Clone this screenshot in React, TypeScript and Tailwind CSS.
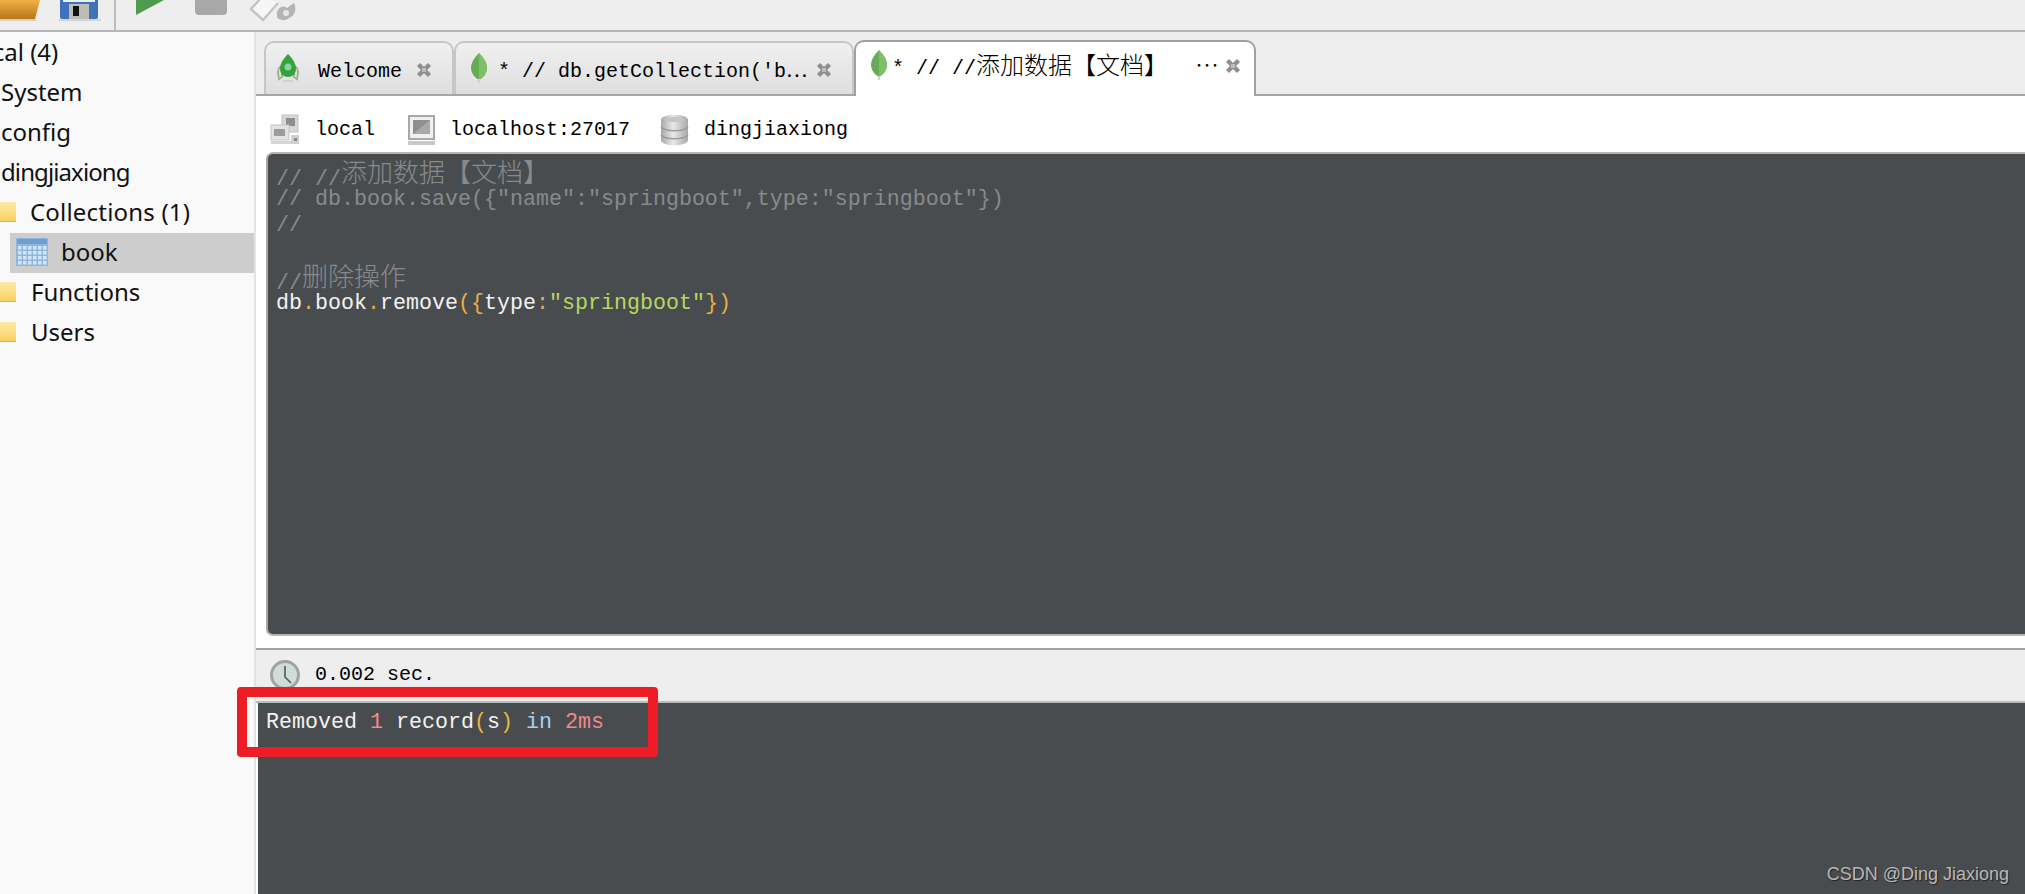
import React from "react";

const mono = "font-['Liberation_Mono','Noto_Sans_CJK_SC',monospace] text-[20px]";
const Cjk = ({ children, className = "" }: { children: React.ReactNode; className?: string }) => (
  <span className={"font-['Noto_Sans_CJK_SC',sans-serif] text-[24px] leading-none font-light " + className}>{children}</span>
);
const CjkEd = ({ children }: { children: React.ReactNode }) => (
  <span className="font-['Noto_Sans_CJK_SC',sans-serif] text-[26px] leading-none font-light relative -top-[3px]">{children}</span>
);

const Close = () => (
  <svg width="16" height="16" viewBox="0 0 16 16" className="shrink-0 mt-[2px]">
    <path d="M2.5 2.5 L13.5 13.5 M13.5 2.5 L2.5 13.5" stroke="#8f8f8f" strokeWidth="4.4" />
    <rect x="6" y="6" width="4" height="4" fill="#bdbdbd" />
  </svg>
);

const Leaf = () => (
  <svg width="16" height="31" viewBox="0 0 16 31" className="shrink-0">
    <path d="M8 0 C13 5 16 10 16 15 C16 20 12 25 8 27 C4 25 0 20 0 15 C0 10 3 5 8 0Z" fill="#66ab55" />
    <path d="M8 0 C13 5 16 10 16 15 C16 20 12 25 8 27Z" fill="#7fbf6a" />
    <rect x="7" y="26" width="2" height="4" fill="#d8d0c0" />
  </svg>
);

const Rocket = () => (
  <svg width="24" height="31" viewBox="0 0 24 31" className="shrink-0">
    <path d="M2 20 C2 15 4 14 6 13 L6 24 L3 26Z M22 20 C22 15 20 14 18 13 L18 24 L21 26Z" fill="none" stroke="#9fb58f" strokeWidth="2" />
    <path d="M12 1 C16 5 20 10 20 16 C20 21 16 24 12 24 C8 24 4 21 4 16 C4 10 8 5 12 1Z" fill="#35a23c" />
    <circle cx="12" cy="14" r="3.5" fill="#8fd0a0" />
    <rect x="7" y="27" width="10" height="2" fill="#d0d0d0" />
  </svg>
);

const Server = () => (
  <svg width="30" height="32" viewBox="0 0 30 32" className="shrink-0">
    <rect x="12" y="1" width="16" height="17" fill="#d8d8d8" stroke="#c2c2c2" />
    <rect x="16" y="4" width="9" height="8" fill="#8e8e8e" />
    <rect x="1" y="11" width="18" height="15" fill="#e2e2e2" stroke="#c6c6c6" />
    <rect x="4" y="15" width="11" height="7" fill="#9c9c9c" />
    <rect x="1" y="27" width="20" height="3" fill="#d4d4d4" />
    <rect x="21" y="21" width="8" height="9" fill="#cfcfcf" />
    <rect x="24" y="24" width="3" height="3" fill="#8a8a8a" />
  </svg>
);

const Monitor = () => (
  <svg width="27" height="31" viewBox="0 0 27 31" className="shrink-0">
    <rect x="1" y="1" width="25" height="23" fill="#f0f0f0" stroke="#a8a8a8" strokeWidth="2" />
    <rect x="5" y="5" width="17" height="14" fill="#8f8f8f" />
    <path d="M5 19 L22 5 L22 19Z" fill="#a9a9a9" />
    <rect x="0" y="26" width="27" height="4" fill="#c9c9c9" />
  </svg>
);

const Db = () => (
  <svg width="29" height="32" viewBox="0 0 29 32" className="shrink-0">
    <defs>
      <linearGradient id="dbg" x1="0" x2="1" y1="0" y2="0">
        <stop offset="0" stopColor="#a8a8a8" />
        <stop offset="0.45" stopColor="#e8e8e8" />
        <stop offset="1" stopColor="#a8a8a8" />
      </linearGradient>
    </defs>
    <path d="M1 6 C1 -1 28 -1 28 6 L28 26 C28 33 1 33 1 26Z" fill="url(#dbg)" />
    <ellipse cx="14.5" cy="5.5" rx="10" ry="2.6" fill="#c4c4c4" />
    <path d="M1 13 C5 18 24 18 28 13 M1 21 C5 26 24 26 28 21" fill="none" stroke="#9c9c9c" strokeWidth="1.5" />
  </svg>
);

const Clock = () => (
  <svg width="30" height="30" viewBox="0 0 30 30" className="shrink-0 -mt-[2px]">
    <circle cx="15" cy="15" r="13.5" fill="#cfdcda" stroke="#a2a2a2" strokeWidth="3" />
    <path d="M15 6 L15 17 L21 23" fill="none" stroke="#555" strokeWidth="1.6" />
  </svg>
);

const Folder = () => (
  <div className="w-[16px] h-[20px] bg-gradient-to-b from-[#fdeba6] to-[#f9cf5c] border-b border-[#e6b94a] shrink-0" />
);

const TableIcon = () => (
  <svg width="32" height="28" viewBox="0 0 32 28" className="shrink-0">
    <rect width="32" height="28" fill="#8fb7de" />
    <rect x="1" y="1" width="30" height="5" fill="#6f9fd0" />
    {[0, 1, 2, 3].map((r) =>
      [0, 1, 2, 3, 4, 5].map((c) => (
        <rect key={r + "-" + c} x={2 + c * 5} y={8 + r * 5} width="3.5" height="3.5" fill="#d5e5f5" />
      ))
    )}
  </svg>
);

const Tab = ({
  icon,
  active,
  width,
  children,
}: {
  icon: React.ReactNode;
  active?: boolean;
  width: string;
  children: React.ReactNode;
}) => (
  <div
    className={
      active
        ? `${width} h-[56px] -mb-[2px] relative z-10 flex items-center pl-[15px] pb-[8px] rounded-t-[10px] bg-white border-2 border-b-0 border-[#a0a0a0] text-black`
        : `${width} h-[53px] flex items-center rounded-t-[10px] bg-gradient-to-b from-[#f0f0f0] to-[#dedede] border-2 border-b-0 border-[#c6c6c6] text-black`
    }
  >
    {icon}
    {children}
  </div>
);

const Row = ({ children, className = "" }: { children: React.ReactNode; className?: string }) => (
  <div className={"h-[40px] pb-[3px] flex items-center whitespace-nowrap " + className}>{children}</div>
);

const Line = ({ children }: { children?: React.ReactNode }) => (
  <div className="h-[26px] leading-[26px] whitespace-pre">{children}</div>
);

export default function App() {
  return (
    <div className="relative w-[2025px] h-[894px] overflow-hidden flex flex-col bg-[#eeeeee]">
      {/* toolbar */}
      <div className="h-[32px] shrink-0 flex bg-[#eeeeee] border-b-2 border-[#b6b6b6] overflow-hidden">
        <div className="w-[116px] h-full flex items-start border-r-2 border-[#bcbcbc] shrink-0">
          <svg width="40" height="21" viewBox="0 0 40 21" className="shrink-0">
            <defs>
              <linearGradient id="fo" x1="0" x2="0" y1="0" y2="1">
                <stop offset="0" stopColor="#f0b040" />
                <stop offset="1" stopColor="#b8771a" />
              </linearGradient>
            </defs>
            <path d="M0 0 H40 L35 19 H0Z" fill="url(#fo)" />
            <rect x="0" y="19" width="36" height="2" fill="#d8d0c4" />
          </svg>
          <svg width="42" height="21" viewBox="0 0 42 21" className="ml-[19px] shrink-0">
            <path d="M1 0 H39 V17 Q39 19 37 19 H3 Q1 19 1 17Z" fill="#3f72b8" />
            <rect x="4" y="0" width="32" height="2" fill="#e8eef5" />
            <rect x="10" y="4" width="20" height="15" fill="#bdbdb6" />
            <rect x="14" y="6" width="6" height="10" fill="#111" />
            <rect x="0" y="19" width="42" height="2" fill="#d4d4d4" />
          </svg>
        </div>
        <div className="flex items-start pl-[19px]">
          <svg width="30" height="16" viewBox="0 0 30 16" className="shrink-0">
            <path d="M1 0 H29 L1 15Z" fill="#4f9a4d" />
          </svg>
          <svg width="32" height="15" viewBox="0 0 32 15" className="ml-[30px] shrink-0">
            <path d="M0 0 H32 V11 Q32 15 28 15 H4 Q0 15 0 11Z" fill="#a8a8a8" />
          </svg>
          <svg width="48" height="22" viewBox="0 0 48 22" className="ml-[23px] shrink-0">
            <path d="M11 -2 L1 9 L13 20 L28 3" fill="#f6f6f6" stroke="#c4c4c4" strokeWidth="2.4" />
            <path d="M27 12 C29 7 33 5 37 8 L44 3 C47 9 45 16 39 18 C36 21 30 21 27 17Z" fill="#b4b4b4" />
            <circle cx="36" cy="13" r="3" fill="#e6e6e6" />
          </svg>
        </div>
      </div>

      <div className="flex-1 flex min-h-0">
        {/* sidebar */}
        <div className="w-[256px] shrink-0 bg-[#f9f9f9] border-r-2 border-[#e4e4e4] pt-[1px] overflow-hidden font-['Noto_Sans',sans-serif] text-[24px] text-[#111]">
          <Row className="-ml-[28px]">local (4)</Row>
          <Row className="pl-[1px]">System</Row>
          <Row className="pl-[1px]">config</Row>
          <Row className="pl-[1px] tracking-[-0.9px]">dingjiaxiong</Row>
          <Row className="gap-[14px] tracking-[0.2px]">
            <Folder />
            Collections (1)
          </Row>
          <Row className="ml-[10px] bg-[#cdcdcd] pl-[6px] pb-[2px] gap-[13px]">
            <TableIcon />
            book
          </Row>
          <Row className="gap-[15px]">
            <Folder />
            Functions
          </Row>
          <Row className="gap-[15px]">
            <Folder />
            Users
          </Row>
        </div>

        {/* main */}
        <div className={"flex-1 min-w-0 flex flex-col bg-white " + mono}>
          <div className="h-[64px] shrink-0 flex items-end pl-[8px] bg-[#eeeeee] border-b-2 border-[#a6a6a6]">
            <Tab width="w-[190px]" icon={<span className="ml-[10px]"><Rocket /></span>}>
              <span className="ml-[18px] mt-[6px] w-[98px]">Welcome</span>
              <Close />
            </Tab>
            <Tab width="w-[400px]" icon={<span className="ml-[15px]"><Leaf /></span>}>
              <span className="ml-[11px] mt-[6px] w-[318px] whitespace-pre">* // db.getCollection('b⋯</span>
              <Close />
            </Tab>
            <Tab active width="w-[402px]" icon={<Leaf />}>
              <span className="ml-[5px] mt-[6px] w-[333px] whitespace-pre">
                * // //<Cjk>添加数据【文档】</Cjk>{"  "}<Cjk className="ml-[3px]">⋯</Cjk>
              </span>
              <Close />
            </Tab>
          </div>

          <div className="h-[56px] shrink-0 flex items-center pl-[14px] pt-[12px] text-black">
            <Server />
            <span className="ml-[15px] w-[93px]">local</span>
            <Monitor />
            <span className="ml-[15px] w-[210px]">localhost:27017</span>
            <Db />
            <span className="ml-[15px]">dingjiaxiong</span>
          </div>

          <div className="ml-[10px] h-[484px] shrink-0 bg-[#494c4f] rounded-l-[7px] border-t-2 border-b-2 border-l-2 border-t-[#b8b4b0] border-b-[#b8b4b0] border-l-[#a8a8a8] pt-[7px] pl-[8px] text-[#888a8c] text-[21.67px]">
            <Line>
              // //<CjkEd>添加数据【文档】</CjkEd>
            </Line>
            <Line>// db.book.save({'{'}"name":"springboot",type:"springboot"{'}'})</Line>
            <Line>//</Line>
            <Line />
            <Line>
              //<CjkEd>删除操作</CjkEd>
            </Line>
            <Line>
              <span className="text-[#f2f2f2]">db</span>
              <span className="text-[#e0b050]">.</span>
              <span className="text-[#f2f2f2]">book</span>
              <span className="text-[#e0b050]">.</span>
              <span className="text-[#f2f2f2]">remove</span>
              <span className="text-[#e8b040]">({"{"}</span>
              <span className="text-[#f2f2f2]">type</span>
              <span className="text-[#e0b050]">:</span>
              <span className="text-[#b5d85f]">"springboot"</span>
              <span className="text-[#e8b040]">{"}"})</span>
            </Line>
          </div>

          <div className="h-[12px] shrink-0" />

          <div className="h-[55px] shrink-0 flex items-center pl-[14px] bg-[#eeeeee] border-t-2 border-b-2 border-t-[#a4a4a4] border-b-[#bbbbbb] text-black">
            <Clock />
            <span className="ml-[15px] -mt-[2px]">0.002 sec.</span>
          </div>

          <div className="flex-1 ml-[2px] bg-[#494c4f] pt-[7px] pl-[8px] whitespace-pre text-[21.67px]">
            <Line>
              <span className="text-[#f2f2f2]">Removed </span>
              <span className="text-[#f08a8a]">1</span>
              <span className="text-[#f2f2f2]"> record</span>
              <span className="text-[#e8b840]">(</span>
              <span className="text-[#f2f2f2]">s</span>
              <span className="text-[#e8b840]">)</span>
              <span className="text-[#a8d0f0]"> in </span>
              <span className="text-[#f08a8a]">2</span>
              <span className="text-[#f08a8a]">ms</span>
            </Line>
          </div>
        </div>
      </div>

      {/* annotation overlay */}
      <div className="absolute left-[237px] top-[687px] w-[421px] h-[70px] border-[10px] border-[#ee1c25] rounded-[4px]" />
      {/* watermark overlay */}
      <div className="absolute right-[16px] top-[862px] font-['Liberation_Sans',sans-serif] text-[18px] leading-[24px] text-[#b8b8b8] [text-shadow:1px_1px_1px_#222]">
        CSDN @Ding Jiaxiong
      </div>
    </div>
  );
}
